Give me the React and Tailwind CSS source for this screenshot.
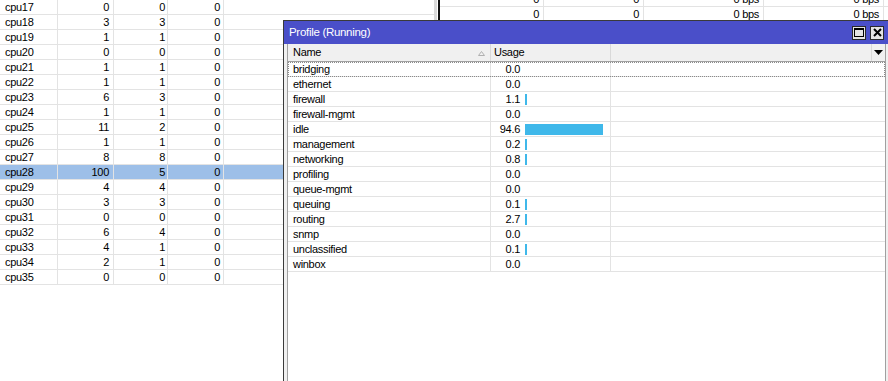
import React from "react";

const cpuRows = [
  ["cpu17", 0, 0, 0], ["cpu18", 3, 3, 0], ["cpu19", 1, 1, 0], ["cpu20", 0, 0, 0],
  ["cpu21", 1, 1, 0], ["cpu22", 1, 1, 0], ["cpu23", 6, 3, 0], ["cpu24", 1, 1, 0],
  ["cpu25", 11, 2, 0], ["cpu26", 1, 1, 0], ["cpu27", 8, 8, 0], ["cpu28", 100, 5, 0],
  ["cpu29", 4, 4, 0], ["cpu30", 3, 3, 0], ["cpu31", 0, 0, 0], ["cpu32", 6, 4, 0],
  ["cpu33", 4, 1, 0], ["cpu34", 2, 1, 0], ["cpu35", 0, 0, 0],
];

const profile = [
  ["bridging", "0.0"], ["ethernet", "0.0"], ["firewall", "1.1"], ["firewall-mgmt", "0.0"],
  ["idle", "94.6"], ["management", "0.2"], ["networking", "0.8"], ["profiling", "0.0"],
  ["queue-mgmt", "0.0"], ["queuing", "0.1"], ["routing", "2.7"], ["snmp", "0.0"],
  ["unclassified", "0.1"], ["winbox", "0.0"],
];

function TopRow() {
  return (
    <div className="flex h-[15px] border-b border-[#e3e3e3]">
      <div className="w-[104px] border-r border-[#e3e3e3] text-right pr-[4px] leading-[14px]">0</div>
      <div className="w-[100px] border-r border-[#e3e3e3] text-right pr-[4px] leading-[14px]">0</div>
      <div className="w-[120px] border-r border-[#e3e3e3] text-right pr-[4px] leading-[14px]">0 bps</div>
      <div className="w-[120px] border-r border-[#e3e3e3] text-right pr-[4px] leading-[14px]">0 bps</div>
      <div className="flex-1" />
    </div>
  );
}

export default function App() {
  return (
    <div className="relative w-[888px] h-[381px] overflow-hidden bg-white text-black text-[11px] tracking-[-0.3px] font-['Liberation_Sans',Arial,sans-serif]">
      <div className="flex h-full">
        {/* left cpu table */}
        <div className="w-[434px] flex flex-col">
          {cpuRows.map((r) => (
            <div
              key={r[0]}
              className={`flex h-[15px] border-b border-[#e3e3e3] leading-[14px] ${r[0] === "cpu28" ? "bg-[#9dbfe8]" : ""}`}
            >
              <div className="w-[58px] border-r border-[#e3e3e3] pl-[5px]">{r[0]}</div>
              <div className="w-[56px] border-r border-[#e3e3e3] text-right pr-[4px]">{r[1]}</div>
              <div className="w-[54px] border-r border-[#e3e3e3] text-right pr-[2px]">{r[2]}</div>
              <div className="w-[56px] border-r border-[#e3e3e3] text-right pr-[3px]">{r[3]}</div>
              <div className="flex-1" />
            </div>
          ))}
        </div>
        <div className="w-[3px] bg-[#dadada]" />
        <div className="w-[1px] bg-white" />
        <div className="w-[2px] bg-[#111]" />
        {/* right panel */}
        <div className="flex-1 flex flex-col -mt-[8px]">
          <TopRow />
          <TopRow />
        </div>
      </div>

      {/* Profile window */}
      <div className="absolute left-[283px] top-[20px] w-[607px] h-[380px] border border-[#3a3a3a] bg-[#f0f0f0] flex flex-col">
        <div className="h-[23px] bg-[#4a4fc9] flex items-center pl-[5px] pr-[5px] text-white">
          <span className="flex-1 text-[11.5px]">Profile (Running)</span>
          <div className="flex gap-[4px]">
            <div className="w-[14px] h-[14px] border border-[#2a2a2a] bg-[#e4e4e4] flex items-center justify-center">
              <svg width="10" height="9" viewBox="0 0 10 9">
                <rect x="0.5" y="0.5" width="9" height="8" fill="none" stroke="#000" strokeWidth="1" />
                <rect x="0" y="0" width="10" height="2" fill="#000" />
              </svg>
            </div>
            <div className="w-[14px] h-[14px] border border-[#2a2a2a] bg-[#e4e4e4] flex items-center justify-center">
              <svg width="9" height="9" viewBox="0 0 9 9">
                <path d="M1 1L8 8M8 1L1 8" stroke="#000" strokeWidth="2" />
              </svg>
            </div>
          </div>
        </div>
        <div className="flex-1 flex flex-col px-[3px]">
          <div className="flex-1 flex flex-col border-l border-r border-[#a0a0a0] bg-white">
            {/* header */}
            <div className="flex h-[18px] bg-[#f0f0f0] border-b border-[#a0a0a0] leading-[17px]">
              <div className="w-[203px] border-r border-[#d9d9d9] pl-[5px] flex items-center">
                <span className="flex-1">Name</span>
                <svg width="7" height="5" viewBox="0 0 7 5" className="mr-[5px] mt-[1px]">
                  <path d="M3.5 0.5L6.5 4.5H0.5Z" fill="none" stroke="#b0b0b0" strokeWidth="1" />
                </svg>
              </div>
              <div className="w-[120px] border-r border-[#d9d9d9] pl-[3px]">Usage</div>
              <div className="flex-1 border-r border-[#d9d9d9]" />
              <div className="w-[13px] flex items-center justify-center">
                <svg width="9" height="5" viewBox="0 0 9 5">
                  <path d="M0 0H9L4.5 5Z" fill="#000" />
                </svg>
              </div>
            </div>
            {/* rows */}
            {profile.map(([name, val], i) => {
              const v = parseFloat(val);
              const w = v > 0.05 ? Math.max(2, Math.round(v * 0.825)) : 0;
              return (
                <div
                  key={name}
                  className={`flex h-[15px] border-b border-[#e3e3e3] leading-[14px] ${i === 0 ? "outline outline-1 outline-dotted outline-[#8a8a8a] -outline-offset-1" : ""}`}
                >
                  <div className="w-[203px] border-r border-[#e3e3e3] pl-[5px]">{name}</div>
                  <div className="w-[120px] border-r border-[#e3e3e3] flex items-center">
                    <span className="w-[29px] text-right">{val}</span>
                    {w > 0 && (
                      <div className="ml-[5px] h-[11px] bg-[#3fb8ea]" style={{ width: w + "px" }} />
                    )}
                  </div>
                  <div className="flex-1" />
                </div>
              );
            })}
            <div className="flex-1" />
          </div>
        </div>
      </div>
    </div>
  );
}
